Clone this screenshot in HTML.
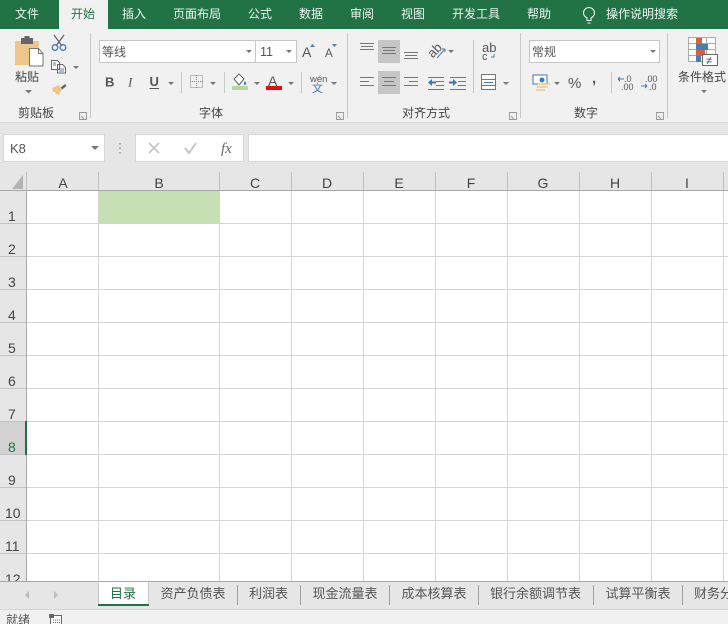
<!DOCTYPE html>
<html><head><meta charset="utf-8"><style>
html,body{margin:0;padding:0;background:#fff}
svg{display:block}
text{font-family:"Liberation Sans","Noto Sans CJK SC",sans-serif;fill:#444}
.t{font-size:12px;fill:#eef5f0;text-anchor:middle}
.l{font-size:12px;fill:#444;text-anchor:middle}
.h{font-size:14px;fill:#444;text-anchor:middle}
.r{font-size:14px;fill:#444}
.s{font-size:13px;fill:#555;text-anchor:middle}
.g{stroke:#d4d4d4;stroke-width:1}
.ln{stroke:#777;stroke-width:1;fill:none}
.sep{stroke:#c8c8c8;stroke-width:1}
.ar{fill:#777}
</style></head><body>
<svg width="728" height="624" viewBox="0 0 728 624" xmlns="http://www.w3.org/2000/svg">
<rect width="728" height="624" fill="#fff"/>
<!-- title -->
<rect width="728" height="29" fill="#217346"/>
<rect x="0" y="29" width="728" height="93" fill="#f1f1f1"/>
<rect x="59" y="0" width="49" height="29" fill="#f1f1f1"/>
<text class="t" x="27" y="18">文件</text>
<text class="t" x="83" y="18" style="fill:#217346">开始</text>
<text class="t" x="134" y="18">插入</text>
<text class="t" x="197" y="18">页面布局</text>
<text class="t" x="260" y="18">公式</text>
<text class="t" x="311" y="18">数据</text>
<text class="t" x="362" y="18">审阅</text>
<text class="t" x="413" y="18">视图</text>
<text class="t" x="476" y="18">开发工具</text>
<text class="t" x="539" y="18">帮助</text>
<text class="t" x="642" y="18">操作说明搜索</text>
<path d="M587 20.5v-2.5c-2.5-1.5-3.5-3.2-3.5-5a5.5 5.5 0 0 1 11 0c0 1.800-1 3.500-3.500 5v2.500zM587.500 23h3" fill="none" stroke="#eef5f0" stroke-width="1.100"/>
<!-- separators -->
<path class="sep" d="M90.500 33V118M347.500 33V118M520.500 33V118M667.500 33V118"/>
<!-- clipboard -->
<rect x="15" y="41" width="24" height="24" fill="#ecc789"/>
<rect x="21" y="38" width="12" height="6" fill="#666"/>
<rect x="24.500" y="36" width="5" height="4" fill="#666"/>
<path d="M29.500 48.500h9l4.500 5v12.500h-13.500z" fill="#fff" stroke="#777"/>
<path d="M38.500 48.500v5h4.500" fill="none" stroke="#777"/>
<text class="l" x="27" y="81">粘贴</text>
<path class="ar" d="M25 90h7l-3.500 3.500z"/>
<path d="M54 35l8 11M64 35l-8 11" stroke="#666" stroke-width="1.300" fill="none"/>
<circle cx="55" cy="47.500" r="2.800" fill="none" stroke="#4a7eb0" stroke-width="1.400"/>
<circle cx="63" cy="47.500" r="2.800" fill="none" stroke="#4a7eb0" stroke-width="1.400"/>
<path d="M51.500 60.500h6l2 2v7h-8zM57.500 64.500h5l3 3v5.500h-8z" fill="#fff" stroke="#666"/>
<path d="M59 69h5M59 71h5M53 63h3M53 65h3" stroke="#4a7eb0"/>
<path class="ar" d="M73 66h6l-3 3z"/>
<path d="M60 88l5-4 1.500 2-5 4z" fill="#666"/>
<path d="M52 88l7-3 3 4-3 6-3-1-1-2-2 0z" fill="#ecc789"/>
<text class="l" x="36" y="117">剪贴板</text>
<path d="M79.500 112.500h7v7h-7z M84 119l-3-3" fill="none" stroke="#999" stroke-width=".9"/>
<!-- font -->
<rect x="99.500" y="40.500" width="156" height="22" fill="#fff" stroke="#c6c6c6"/>
<rect x="255.500" y="40.500" width="41" height="22" fill="#fff" stroke="#c6c6c6"/>
<text x="102" y="56" style="font-size:12px;fill:#555">等线</text>
<text x="260" y="56" style="font-size:12.500px;fill:#555">11</text>
<path class="ar" d="M246 50h6l-3 3zM286 50h6l-3 3z"/>
<text x="302" y="57" style="font-size:14px;fill:#555">A</text>
<path d="M310 47l2.500-3 2.500 3z" fill="#4a7eb0"/>
<text x="325" y="57" style="font-size:11.500px;fill:#555">A</text>
<path d="M332 44h5l-2.500 3z" fill="#4a7eb0"/>
<text x="105" y="86.500" style="font-size:13px;font-weight:bold;fill:#555">B</text>
<text x="128" y="86.500" style="font-size:13px;font-style:italic;font-family:'Liberation Serif',serif;fill:#555">I</text>
<text x="149.500" y="86" style="font-size:13px;font-weight:bold;fill:#555">U</text>
<path d="M149.500 88.500h9.500" stroke="#555"/>
<path class="ar" d="M168 82h6l-3 3z"/>
<path class="sep" d="M181.500 72V93"/>
<rect x="190.500" y="75.500" width="12" height="12" fill="none" stroke="#888" stroke-dasharray="1 1"/>
<path d="M196.500 75v13M190 81.500h13" stroke="#888" stroke-dasharray="1 1"/>
<path class="ar" d="M210 82h6l-3 3z"/>
<path class="sep" d="M224.500 72V93"/>
<path d="M234 79l5-5 5 5-5 6z" fill="#fff" stroke="#666"/>
<path d="M245 81c1.500 2 1.500 4 0 4s-1.500-2 0-4z" fill="#4a7eb0"/>
<rect x="232" y="86" width="16" height="4" fill="#b5d6a3"/>
<path class="ar" d="M254 82h6l-3 3z"/>
<text x="268" y="86" style="font-size:14px;fill:#555">A</text>
<rect x="266" y="86" width="16" height="4" fill="#e01010"/>
<path class="ar" d="M288 82h6l-3 3z"/>
<path class="sep" d="M301.500 72V93"/>
<text x="310" y="82" style="font-size:9.500px;fill:#555">wén</text>
<text x="312" y="92" style="font-size:11px;fill:#3c78b4">文</text>
<path class="ar" d="M331 82h6l-3 3z"/>
<text class="l" x="211" y="117">字体</text>
<path d="M336.500 112.500h7v7h-7z M341 119l-3-3" fill="none" stroke="#999" stroke-width=".9"/>
<!-- align -->
<rect x="378" y="40" width="22" height="23" fill="#c6c6c6"/>
<rect x="378" y="71" width="22" height="23" fill="#c6c6c6"/>
<path class="ln" d="M360 43.500h14M361 46.500h12M360 49.500h14M382 47.500h14M383 50.500h12M382 53.500h14M404 52.500h14M405 55.500h12M404 58.500h14"/>
<path class="ln" d="M360 77.500h14M360 81.500h9M360 85.500h14M382 77.500h14M384 81.500h10M382 85.500h14M404 77.500h14M409 81.500h9M404 85.500h14"/>
<text x="427" y="55" transform="rotate(-45 434 50)" style="font-size:13px;fill:#555">ab</text>
<path d="M437 58l8-9M445 49h-3M445 49v3" stroke="#4a7eb0" fill="none"/>
<path class="ar" d="M448 50h6l-3 3z"/>
<path d="M428 77.500h16M436 81.500h8M436 85.500h8M428 89.500h16" class="ln"/>
<path d="M428 82.500l4-3.500v2.500h4v2h-4v2.500z" fill="#3c78b4"/>
<path d="M450 77.500h16M458 81.500h8M458 85.500h8M450 89.500h16" class="ln"/>
<path d="M457 82.500l-4-3.500v2.500h-4v2h4v2.500z" fill="#3c78b4"/>
<path class="sep" d="M473.500 40V93"/>
<text x="482" y="52" style="font-size:13px;fill:#555">ab</text>
<text x="482" y="60" style="font-size:11px;fill:#555">c</text>
<path d="M494 54v3h-3" stroke="#4a7eb0" fill="none"/>
<rect x="481.500" y="74.500" width="14" height="15" fill="#fff" stroke="#777"/>
<path d="M482 79.500h14M482 85.500h14" stroke="#777"/>
<path d="M484 82.500h9" stroke="#3c78b4"/>
<path class="ar" d="M503 82h6l-3 3z"/>
<text class="l" x="426" y="117">对齐方式</text>
<path d="M509.500 112.500h7v7h-7z M514 119l-3-3" fill="none" stroke="#999" stroke-width=".9"/>
<!-- number -->
<rect x="529.500" y="40.500" width="130" height="22" fill="#fff" stroke="#c6c6c6"/>
<text x="532" y="56" style="font-size:12px;fill:#555">常规</text>
<path class="ar" d="M650 50h6l-3 3z"/>
<rect x="533" y="75" width="14" height="9" fill="#fff" stroke="#3c78b4"/>
<circle cx="542" cy="80" r="2.500" fill="#3c78b4"/>
<path d="M538 84h12M537 87h11M536 90h9" stroke="#ecc789" stroke-width="1.500"/>
<path class="ar" d="M554 82h6l-3 3z"/>
<text x="568" y="88" style="font-size:15px;fill:#555">%</text>
<text x="592" y="83" style="font-size:15px;font-weight:bold;fill:#555">,</text>
<path class="sep" d="M611.500 72V93"/>
<text x="624" y="82" style="font-size:9px;fill:#555">.0</text>
<text x="621" y="90" style="font-size:9px;fill:#555">.00</text>
<path d="M618 79h6M618 79l2-2M618 79l2 2" stroke="#3c78b4" fill="none"/>
<text x="645" y="82" style="font-size:9px;fill:#555">.00</text>
<text x="649" y="90" style="font-size:9px;fill:#555">.0</text>
<path d="M641 86h6M647 86l-2-2M647 86l-2 2" stroke="#3c78b4" fill="none"/>
<text class="l" x="586" y="117">数字</text>
<path d="M656.500 112.500h7v7h-7z M661 119l-3-3" fill="none" stroke="#999" stroke-width=".9"/>
<!-- cond format -->
<path d="M688.500 37.500h27v24h-27zM688.500 43.500h27M688.500 49.500h27M688.500 55.500h27M697.500 37v25M706.500 37v25" fill="#fff" stroke="#aaa"/>
<rect x="696" y="38" width="6" height="6" fill="#d9603b"/>
<rect x="696" y="44" width="12" height="6" fill="#4a7eb0"/>
<rect x="696" y="50" width="9" height="6" fill="#d9603b"/>
<rect x="696" y="56" width="5" height="6" fill="#4a7eb0"/>
<rect x="702.500" y="54.500" width="15" height="11" fill="#fff" stroke="#666"/>
<text x="706" y="64" style="font-size:11px;fill:#444">≠</text>
<text class="l" x="702" y="81">条件格式</text>
<path class="ar" d="M701 90h6l-3 3z"/>
<!-- formula band -->
<rect x="0" y="122" width="728" height="50" fill="#e6e6e6"/>
<rect x="0" y="122" width="728" height="1" fill="#d8d8d8"/>
<rect x="3.500" y="134.500" width="101" height="27" fill="#fff" stroke="#d6d6d6"/>
<text x="10" y="153" style="font-size:13px;fill:#555">K8</text>
<path class="ar" d="M91 146h8l-4 4z"/>
<path d="M120 143v1.500M120 147.500v1.500M120 152v1.500" stroke="#999" stroke-width="1.500"/>
<rect x="135.500" y="134.500" width="108" height="27" fill="#fff" stroke="#d6d6d6"/>
<rect x="248.500" y="134.500" width="480" height="27" fill="#fff" stroke="#d6d6d6"/>
<path d="M149 143l10 10M159 143l-10 10" stroke="#c4c4c4" stroke-width="1.700"/>
<path d="M185 148l4 5 7-10" stroke="#c4c4c4" stroke-width="1.900" fill="none"/>
<text x="221" y="153" style="font-size:15px;font-style:italic;font-family:'Liberation Serif',serif;fill:#666">fx</text>
<!-- headers -->
<rect x="0" y="172" width="728" height="18" fill="#e6e6e6"/>
<rect x="0" y="172" width="26" height="409" fill="#e6e6e6"/>
<path d="M23 175v14h-11z" fill="#b4b4b4"/>
<rect x="99" y="190" width="120" height="33" fill="#c6dfb3"/>
<path class="g" d="M98.500 190V581M219.500 190V581M291.500 190V581M363.500 190V581M435.500 190V581M507.500 190V581M579.500 190V581M651.500 190V581M723.500 190V581"/>
<path class="g" d="M26 223.500H728M26 256.500H728M26 289.500H728M26 322.500H728M26 355.500H728M26 388.500H728M26 421.500H728M26 454.500H728M26 487.500H728M26 520.500H728M26 553.500H728"/>
<path d="M26.500 172V190M98.500 172V190M219.500 172V190M291.500 172V190M363.500 172V190M435.500 172V190M507.500 172V190M579.500 172V190M651.500 172V190M723.500 172V190" stroke="#c0c0c0"/>
<path d="M0 223.500H26M0 256.500H26M0 289.500H26M0 322.500H26M0 355.500H26M0 388.500H26M0 421.500H26M0 454.500H26M0 487.500H26M0 520.500H26M0 553.500H26" stroke="#c4c4c4"/>
<path d="M0 190.500H728" stroke="#a8a8a8"/>
<path d="M26.500 190V581" stroke="#a8a8a8"/>
<rect x="0" y="422" width="25" height="32" fill="#d2d2d2"/>
<rect x="25" y="421" width="2" height="34" fill="#217346"/>
<text class="h" x="63" y="188">A</text>
<text class="h" x="159" y="188">B</text>
<text class="h" x="255" y="188">C</text>
<text class="h" x="327" y="188">D</text>
<text class="h" x="399" y="188">E</text>
<text class="h" x="471" y="188">F</text>
<text class="h" x="543" y="188">G</text>
<text class="h" x="615" y="188">H</text>
<text class="h" x="687" y="188">I</text>
<text class="r" x="8" y="221">1</text>
<text class="r" x="8" y="254">2</text>
<text class="r" x="8" y="287">3</text>
<text class="r" x="8" y="320">4</text>
<text class="r" x="8" y="353">5</text>
<text class="r" x="8" y="386">6</text>
<text class="r" x="8" y="419">7</text>
<text class="r" x="8" y="452" style="fill:#217346">8</text>
<text class="r" x="8" y="485">9</text>
<text class="r" x="5" y="518">10</text>
<text class="r" x="5" y="551">11</text>
<text class="r" x="5" y="584">12</text>
<!-- sheet bar -->
<rect x="0" y="581" width="728" height="28" fill="#e6e6e6"/>
<path d="M0 581.500H728" stroke="#a8a8a8"/>
<rect x="0" y="609" width="728" height="15" fill="#f1f1f1"/>
<path d="M0 609.500H728" stroke="#d4d4d4"/>
<path d="M29 591l-4 4 4 4zM54 591l4 4-4 4z" fill="#bbb"/>
<rect x="98" y="582" width="51" height="23" fill="#fff"/>
<path d="M98.500 581V605M148.500 581V605" stroke="#c8c8c8"/>
<rect x="98" y="604" width="51" height="2" fill="#217346"/>
<text class="s" x="123" y="598" style="fill:#217346">目录</text>
<text class="s" x="193" y="598">资产负债表</text>
<text class="s" x="268.500" y="598">利润表</text>
<text class="s" x="345" y="598">现金流量表</text>
<text class="s" x="434" y="598">成本核算表</text>
<text class="s" x="535.500" y="598">银行余额调节表</text>
<text class="s" x="638" y="598">试算平衡表</text>
<text x="694" y="598" style="font-size:13px;fill:#555">财务分析</text>
<path d="M237.500 585V605M300.500 585V605M389.500 585V605M478.500 585V605M593.500 585V605M682.500 585V605" stroke="#a0a0a0"/>
<text x="6" y="624" style="font-size:12px;fill:#555">就绪</text>
<rect x="50.500" y="615.500" width="11" height="10" fill="#fff" stroke="#666"/>
<rect x="49" y="614" width="5" height="4" fill="#666"/>
<path d="M53 620h7M53 622.500h7" stroke="#666" stroke-dasharray="1 1"/>
</svg>
</body></html>
